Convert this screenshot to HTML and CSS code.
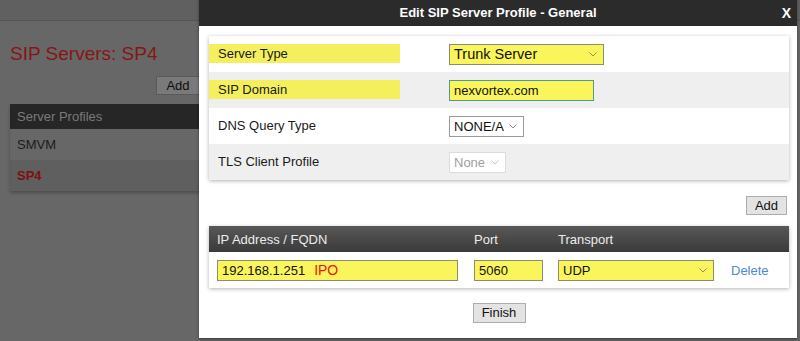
FILE: index.html
```html
<!DOCTYPE html>
<html lang="en">
<head>
    <meta charset="UTF-8">
    <meta name="viewport" content="width=device-width, initial-scale=1.0">
    <title>SIP Servers</title>
    <link rel="stylesheet" href="styles.css">
</head>
<body>
    <div class="topbar"></div>

    <div class="page">
        <h1 class="page-title">SIP Servers: SP4</h1>
        <div class="left-col">
            <div class="add-line"><button class="btn btn-dim">Add</button></div>
            <div class="profile-list">
                <div class="profile-header">Server Profiles</div>
                <div class="profile-row">SMVM</div>
                <div class="profile-row active">SP4</div>
            </div>
        </div>
    </div>

    <div class="modal">
        <div class="modal-title">
            Edit SIP Server Profile - General
            <span class="modal-close">X</span>
        </div>

        <div class="modal-body">
            <div class="card settings">
                <div class="setting-row">
                    <div class="setting-label"><span class="hl">Server Type</span></div>
                    <div class="setting-field">
                        <span class="sel sel-type">
                            <select class="yellow"><option>Trunk Server</option></select>
                            <svg class="chev" width="8" height="5" viewBox="0 0 8 5"><path d="M0.5 0.5 L4 4 L7.5 0.5" fill="none" stroke="#8c8c8c" stroke-width="1"/></svg>
                        </span>
                    </div>
                </div>
                <div class="setting-row alt">
                    <div class="setting-label"><span class="hl">SIP Domain</span></div>
                    <div class="setting-field">
                        <input type="text" class="text-in yellow domain" value="nexvortex.com">
                    </div>
                </div>
                <div class="setting-row">
                    <div class="setting-label"><span>DNS Query Type</span></div>
                    <div class="setting-field">
                        <span class="sel sel-dns">
                            <select><option>NONE/A</option></select>
                            <svg class="chev" width="8" height="5" viewBox="0 0 8 5"><path d="M0.5 0.5 L4 4 L7.5 0.5" fill="none" stroke="#8c8c8c" stroke-width="1"/></svg>
                        </span>
                    </div>
                </div>
                <div class="setting-row alt">
                    <div class="setting-label"><span>TLS Client Profile</span></div>
                    <div class="setting-field">
                        <span class="sel sel-tls">
                            <select disabled><option>None</option></select>
                            <svg class="chev" width="8" height="5" viewBox="0 0 8 5"><path d="M0.5 0.5 L4 4 L7.5 0.5" fill="none" stroke="#c4c4c4" stroke-width="1"/></svg>
                        </span>
                    </div>
                </div>
            </div>

            <div class="add-row"><button class="btn">Add</button></div>

            <div class="card addr-table">
                <div class="addr-head">
                    <div>IP Address / FQDN</div>
                    <div>Port</div>
                    <div>Transport</div>
                    <div></div>
                </div>
                <div class="addr-row">
                    <div><div class="text-in yellow ip-box">192.168.1.251<span class="note">IPO</span></div></div>
                    <div><input type="text" class="text-in yellow port" value="5060"></div>
                    <div>
                        <span class="sel sel-transport">
                            <select class="yellow"><option>UDP</option></select>
                            <svg class="chev" width="8" height="5" viewBox="0 0 8 5"><path d="M0.5 0.5 L4 4 L7.5 0.5" fill="none" stroke="#8c8c8c" stroke-width="1"/></svg>
                        </span>
                    </div>
                    <div><a class="delete-link" href="#">Delete</a></div>
                </div>
            </div>

            <div class="finish-row"><button class="btn">Finish</button></div>
        </div>
    </div>
</body>
</html>
```

FILE: styles.css
```css
body {
    margin: 0;
    background-color: #676767;
    font-family: "Liberation Sans", Arial, sans-serif;
    font-size: 13px;
    color: #111;
    height: 341px;
    overflow: hidden;
}
.topbar {
    height: 20px;
    background-color: #606060;
    border-bottom: 1px solid #555;
}
.page {
    padding: 0 10px;
}
.page-title {
    margin: 22px 0 0 0;
    font-size: 19px;
    line-height: 22px;
    font-weight: normal;
    color: #861616;
}
.left-col {
    width: 190px;
}
.add-line {
    margin-top: 11px;
    text-align: right;
}
.btn {
    font-family: inherit;
    font-size: 13px;
    height: 20px;
    padding: 0 7px;
    background-color: #e3e3e3;
    border: 1px solid #adadad;
    color: #111;
    line-height: 18px;
}
.btn-dim {
    background-color: #7a7a7a;
    border-color: #595959;
    color: #0d0d0d;
    height: 19px;
    width: 44px;
}
.profile-list {
    margin-top: 9px;
    width: 220px;
    box-shadow: 0 2px 3px rgba(0, 0, 0, 0.25);
}
.profile-header {
    height: 25px;
    line-height: 25px;
    padding-left: 7px;
    background-color: #262626;
    color: #7a7a7a;
}
.profile-row {
    height: 31px;
    line-height: 31px;
    padding-left: 7px;
    color: #1b1b1b;
    background-color: #676767;
}
.profile-row.active {
    background-color: #5f5f5f;
    color: #7e1010;
    font-weight: bold;
}

/* dialog */
.modal {
    position: absolute;
    left: 199px;
    top: 0;
    width: 598px;
    height: 338px;
    background-color: #fff;
    border-bottom: 1px solid #454545;
    box-shadow: 0 0 3px rgba(0, 0, 0, 0.4);
}
.modal-title {
    position: relative;
    height: 26px;
    line-height: 26px;
    background-color: #2b2b2b;
    color: #fff;
    font-weight: bold;
    text-align: center;
}
.modal-close {
    position: absolute;
    right: 6px;
    top: 0;
    font-size: 14px;
}
.modal-body {
    padding: 10px 8px 0 10px;
}
.card {
    background-color: #fff;
    box-shadow: 0 1px 4px rgba(0, 0, 0, 0.3);
}
.setting-row {
    display: grid;
    grid-template-columns: 240px 1fr;
    align-items: center;
    height: 36px;
}
.setting-row.alt {
    background-color: #efefef;
}
.setting-label span {
    display: block;
    width: 182px;
    height: 19px;
    line-height: 19px;
    padding-left: 9px;
    margin-top: -2px;
    color: #1a1a1a;
}
.setting-label .hl {
    background-color: #f4ef5c;
}
.setting-field {
    display: flex;
    align-items: center;
}

/* form fields */
.text-in {
    box-sizing: border-box;
    height: 21px;
    font-family: inherit;
    font-size: 13px;
    padding: 0 4px;
    border: 1px solid #8d8d73;
    color: #111;
    line-height: 19px;
}
.yellow {
    background-color: #faf55b;
}
.domain {
    width: 145px;
    border-color: #4e9a93;
}
.sel {
    position: relative;
    display: inline-block;
}
.sel select {
    appearance: none;
    -webkit-appearance: none;
    box-sizing: border-box;
    height: 21px;
    font-family: inherit;
    font-size: 13px;
    padding: 0 4px;
    border: 1px solid #9a9a9a;
    background-color: #fff;
    color: #111;
    border-radius: 0;
}
.sel select.yellow {
    background-color: #faf55b;
    border-color: #8d8d73;
}
.sel select:disabled {
    color: #a0a0a0;
    border-color: #dcdcdc;
    background-color: #fff;
    opacity: 1;
}
.chev {
    position: absolute;
    right: 7px;
    top: 8px;
}
.sel-type select {
    width: 155px;
    font-size: 14.5px;
}
.sel-dns select {
    width: 75px;
}
.sel-tls select {
    width: 57px;
}
.sel-transport select {
    width: 156px;
}

.add-row {
    height: 46px;
    box-sizing: border-box;
    padding: 16px 2px 0 0;
    text-align: right;
}
.add-row .btn {
    height: 19px;
    width: 41px;
    padding: 0;
}

/* address table */
.addr-head,
.addr-row {
    display: grid;
    grid-template-columns: 257px 84px 173px 1fr;
    padding-left: 8px;
    align-items: center;
}
.addr-head {
    height: 26px;
    background: linear-gradient(#585858, #3a3a3a);
    color: #ececec;
}
.addr-row {
    height: 36px;
}
.ip-box {
    width: 241px;
}
.note {
    color: #ee1111;
    font-size: 14px;
    margin-left: 9px;
}
.port {
    width: 69px;
}
.delete-link {
    color: #4f88cf;
    text-decoration: none;
}
.finish-row {
    padding-top: 15px;
    text-align: center;
}
.finish-row .btn {
    width: 53px;
    padding: 0;
}
```
